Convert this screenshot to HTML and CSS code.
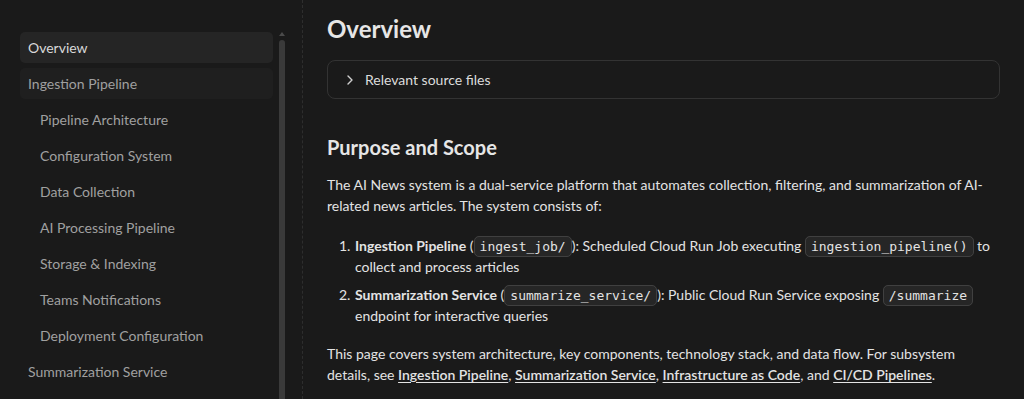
FILE: index.html
```html
<!DOCTYPE html>
<html lang="en">
<head>
    <meta charset="UTF-8">
    <title>Overview</title>
    <link rel="stylesheet" href="styles.css">
</head>
<body>

    <!-- Sidebar -->
    <nav class="sidebar">
        <div class="nav-list">
            <div class="nav-item active">Overview</div>
            <div class="nav-item open">Ingestion Pipeline</div>
            <div class="nav-item sub">Pipeline Architecture</div>
            <div class="nav-item sub">Configuration System</div>
            <div class="nav-item sub">Data Collection</div>
            <div class="nav-item sub">AI Processing Pipeline</div>
            <div class="nav-item sub">Storage &amp; Indexing</div>
            <div class="nav-item sub">Teams Notifications</div>
            <div class="nav-item sub">Deployment Configuration</div>
            <div class="nav-item">Summarization Service</div>
        </div>
        <div class="scrollbar">
            <div class="scroll-arrow"></div>
            <div class="scroll-thumb"></div>
        </div>
    </nav>

    <!-- Main content -->
    <main class="content">
        <h1>Overview</h1>

        <div class="sources">
            <svg class="chevron" width="10" height="12" viewBox="0 0 10 12">
                <path d="M3 2 L7 6 L3 10" fill="none" stroke="#cfcfcf" stroke-width="1.4" stroke-linecap="round" stroke-linejoin="round"/>
            </svg>
            <span>Relevant source files</span>
        </div>

        <h2>Purpose and Scope</h2>

        <p class="intro">The AI News system is a dual-service platform that automates collection, filtering, and summarization of AI-related news articles. The system consists of:</p>

        <ol>
            <li><strong>Ingestion Pipeline</strong> (<code>ingest_job/</code>): Scheduled Cloud Run Job executing <code>ingestion_pipeline()</code> to collect and process articles</li>
            <li><strong>Summarization Service</strong> (<code>summarize_service/</code>): Public Cloud Run Service exposing <code>/summarize</code> endpoint for interactive queries</li>
        </ol>

        <p>This page covers system architecture, key components, technology stack, and data flow. For subsystem details, see <a class="doc-link" href="#">Ingestion Pipeline</a>, <a class="doc-link" href="#">Summarization Service</a>, <a class="doc-link" href="#">Infrastructure as Code</a>, and <a class="doc-link" href="#">CI/CD Pipelines</a>.</p>
    </main>

</body>
</html>
```

FILE: styles.css
```css
/* Global */
body {
    margin: 0;
    background-color: #1a1a1a;
    color: #e3e3e3;
    font-family: "Lato", "Noto Sans", sans-serif;
    font-size: 14px;
    display: flex;
    height: 399px;
    overflow: hidden;
}

/* Sidebar */
.sidebar {
    width: 303px;
    flex-shrink: 0;
    display: flex;
    padding: 32px 0 0 20px;
    box-sizing: border-box;
    border-right: 1px dashed #2e2e2e;
}

.nav-list {
    width: 253px;
    display: flex;
    flex-direction: column;
    gap: 5px;
}

.nav-item {
    height: 31px;
    line-height: 32px;
    padding-left: 8px;
    border-radius: 5px;
    color: #a0a0a0;
    white-space: nowrap;
}

.nav-item.active {
    background-color: #252525;
    color: #d8d8d8;
}

.nav-item.open {
    background-color: #1f1f1f;
}

.nav-item.sub {
    padding-left: 20px;
}

.scrollbar {
    margin-left: 6px;
    width: 6px;
    display: flex;
    flex-direction: column;
    align-items: center;
}

.scroll-arrow {
    width: 0;
    height: 0;
    border-left: 3px solid transparent;
    border-right: 3px solid transparent;
    border-bottom: 4px solid #4a4a4a;
    margin-bottom: 4px;
}

.scroll-thumb {
    width: 6px;
    flex: 1;
    background-color: #3a3a3a;
    border-radius: 3px 3px 0 0;
}

/* Content */
.content {
    flex: 1;
    padding: 0 24px;
    min-width: 0;
}

h1 {
    font-size: 24px;
    font-weight: 700;
    margin: 14px 0 17px;
    color: #e6e6e6;
}

.sources {
    display: flex;
    align-items: center;
    gap: 10px;
    height: 37px;
    padding-left: 17px;
    border: 1px solid #333;
    border-radius: 8px;
    color: #dcdcdc;
}

h2 {
    font-size: 20px;
    font-weight: 700;
    margin: 36px 0 15px;
    color: #e6e6e6;
}

p {
    margin: 0 0 16px;
    line-height: 21px;
}

p.intro {
    margin-bottom: 19px;
}

ol {
    margin: 0 0 17px;
    padding-left: 27px;
}

ol li {
    line-height: 21px;
    margin-bottom: 7px;
    padding-left: 1px;
}

code {
    font-family: "DejaVu Sans Mono", monospace;
    font-size: 13px;
    line-height: 1;
    padding: 2px 5px;
    background-color: #262626;
    border: 1px solid #404040;
    border-radius: 5px;
}

.doc-link {
    color: #e3e3e3;
    font-weight: 600;
    text-decoration: underline;
    text-underline-offset: 2px;
}
```
